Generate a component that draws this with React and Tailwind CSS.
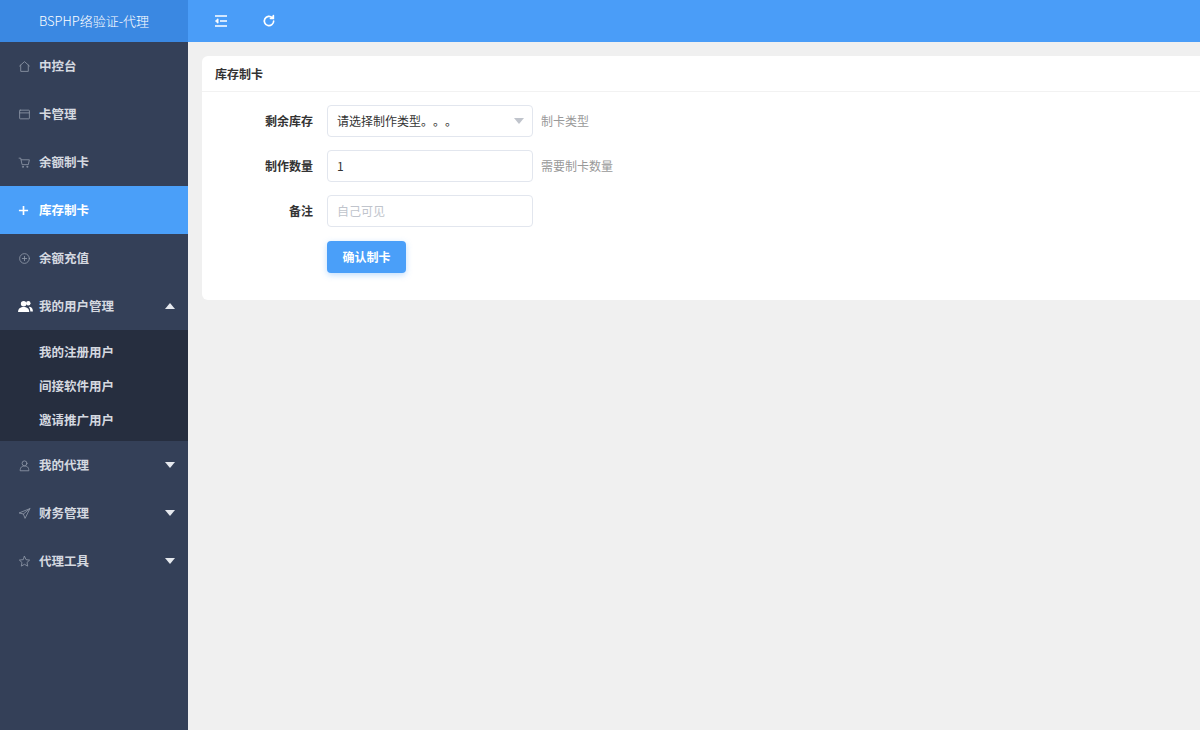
import React from "react";

const font = { fontFamily: '"Noto Sans CJK SC", "Noto Sans", sans-serif' };

const Icon = ({ children }) => (
  <svg width="13" height="13" viewBox="0 0 24 24" fill="none" stroke="currentColor" strokeWidth="1.6" strokeLinecap="round" strokeLinejoin="round">
    {children}
  </svg>
);

const Caret = ({ up }) => (
  <svg width="10" height="6" viewBox="0 0 10 6" className="fill-current">
    {up ? <path d="M0 6 L5 0 L10 6 Z" /> : <path d="M0 0 L10 0 L5 6 Z" />}
  </svg>
);

const menu = [
  { name: "中控台", icon: <Icon><path d="M3 11 L12 3 L21 11" /><path d="M5 9.5 V21 H19 V9.5" /></Icon> },
  { name: "卡管理", icon: <Icon><rect x="3" y="4" width="18" height="16" rx="1" /><path d="M3 9 H21" /></Icon> },
  { name: "余额制卡", icon: <Icon><path d="M2 4 H5 L7.5 16 H19 L21 7 H6" /><circle cx="9" cy="20" r="1" /><circle cx="17" cy="20" r="1" /></Icon> },
];

const Item = ({ icon, name, active, caret }) => (
  <div className={`flex items-center h-12 pl-[18px] pr-[13px] text-[12.5px] font-bold ${active ? "bg-[#4a9ff9] text-white" : "text-[#d5d9e0]"}`}>
    <span className={`w-[21px] flex ${active ? "text-white" : "text-[#8c95a6]"}`}>{icon}</span>
    <span className="flex-1">{name}</span>
    {caret && <span className="text-[#e6e9ee]">{caret}</span>}
  </div>
);

const App = () => {
  return (
    <div className="flex w-[1200px] h-[730px] overflow-hidden bg-[#f0f0f0]" style={font}>
      {/* sidebar */}
      <div className="w-[188px] shrink-0 bg-[#344058] flex flex-col">
        <div className="h-[42px] bg-[#3a88e2] flex items-center justify-center text-white text-[13px] font-light">
          BSPHP络验证-代理
        </div>
        {menu.map((m) => (
          <Item key={m.name} icon={m.icon} name={m.name} />
        ))}
        <Item
          active
          name="库存制卡"
          icon={<svg width="11" height="11" viewBox="0 0 12 12" stroke="currentColor" strokeWidth="1.8"><path d="M6 1 V11 M1 6 H11" /></svg>}
        />
        <Item name="余额充值" icon={<Icon><circle cx="12" cy="12" r="9" /><path d="M12 8 V16 M8 12 H16" /></Icon>} />
        <Item
          name="我的用户管理"
          caret={<Caret up />}
          icon={
            <svg width="15" height="13" viewBox="0 0 16 14" className="fill-white">
              <circle cx="6" cy="4" r="3" />
              <path d="M0 13 C0 9 2.5 7.5 6 7.5 C9.5 7.5 12 9 12 13 Z" />
              <circle cx="11" cy="3.6" r="2.4" />
              <path d="M12.5 7.2 C14.8 7.7 16 9.5 16 12.5 H13.2 C13 10 12.6 8.5 11.6 7.6 Z" />
            </svg>
          }
        />
        <div className="bg-[#262e3f] py-[5px] pb-[4px]">
          {["我的注册用户", "间接软件用户", "邀请推广用户"].map((s) => (
            <div key={s} className="h-[34px] flex items-center pl-[39px] text-[12.5px] font-bold text-[#d5d9e0]">
              {s}
            </div>
          ))}
        </div>
        <Item name="我的代理" caret={<Caret />} icon={<Icon><circle cx="12" cy="8" r="4.5" /><path d="M4 21 C4 15 7.5 13 12 13 C16.5 13 20 15 20 21 Z" /></Icon>} />
        <Item name="财务管理" caret={<Caret />} icon={<Icon><path d="M22 3 L2 11 L10 13 L22 3 L13 21 L10 13" /></Icon>} />
        <Item name="代理工具" caret={<Caret />} icon={<Icon><path d="M12 2.5 L14.9 8.6 L21.5 9.4 L16.6 13.9 L17.9 20.5 L12 17.2 L6.1 20.5 L7.4 13.9 L2.5 9.4 L9.1 8.6 Z" /></Icon>} />
      </div>

      {/* main */}
      <div className="flex-1 flex flex-col min-w-0">
        <div className="h-[42px] bg-[#4a9df8] flex items-center pl-[26px] gap-[34px] text-white shrink-0">
          <svg width="14" height="12" viewBox="0 0 14 12" stroke="currentColor" strokeWidth="1.6" fill="none">
            <path d="M1 1 H13 M6 6 H13 M1 11 H13" />
            <path d="M4 3.8 L1.5 6 L4 8.2 Z" fill="currentColor" strokeWidth="1" />
          </svg>
          <svg width="14" height="14" viewBox="0 0 24 24" stroke="currentColor" strokeWidth="2.8" fill="none" strokeLinecap="round">
            <path d="M20 12 A8 8 0 1 1 17.5 6.2" />
            <path d="M19.5 2.5 V7.5 H14.5" fill="currentColor" />
          </svg>
        </div>
        <div className="pt-[14px] pl-[14px]">
          <div className="w-[1010px] h-[244px] bg-white rounded-[6px]">
            <div className="h-[36px] border-b border-[#f2f2f2] flex items-center pl-[13px] text-[12px] font-bold text-[#333]">
              库存制卡
            </div>
            <div className="pt-[13px] flex flex-col gap-[13px]">
              <div className="flex items-center h-[32px]">
                <div className="w-[111px] text-right text-[12px] font-bold text-[#333]">剩余库存</div>
                <div className="ml-[14px] w-[206px] h-[32px] border border-[#e2e6ee] rounded-[4px] flex items-center justify-between pl-[9px] pr-[8px] text-[12px] text-[#333]">
                  <span className="[text-spacing-trim:space-all]">请选择制作类型。。。</span>
                  <span className="text-[#c0c4cc]"><Caret /></span>
                </div>
                <div className="ml-[8px] text-[12px] text-[#999]">制卡类型</div>
              </div>
              <div className="flex items-center h-[32px]">
                <div className="w-[111px] text-right text-[12px] font-bold text-[#333]">制作数量</div>
                <div className="ml-[14px] w-[206px] h-[32px] border border-[#e2e6ee] rounded-[4px] flex items-center pl-[9px] text-[12px] text-[#333]">
                  1
                </div>
                <div className="ml-[8px] text-[12px] text-[#999]">需要制卡数量</div>
              </div>
              <div className="flex items-center h-[32px]">
                <div className="w-[111px] text-right text-[12px] font-bold text-[#333]">备注</div>
                <div className="ml-[14px] w-[206px] h-[32px] border border-[#e2e6ee] rounded-[4px] flex items-center pl-[9px] text-[12px] text-[#c0c4cc]">
                  自己可见
                </div>
              </div>
              <div className="pl-[125px] pt-[1px]">
                <div className="w-[79px] h-[32px] rounded-[4px] bg-[#4a9ff9] text-white text-[12px] font-bold flex items-center justify-center shadow-[0_2px_6px_rgba(74,159,249,0.35)]">
                  确认制卡
                </div>
              </div>
            </div>
          </div>
        </div>
      </div>
    </div>
  );
};

export default App;
